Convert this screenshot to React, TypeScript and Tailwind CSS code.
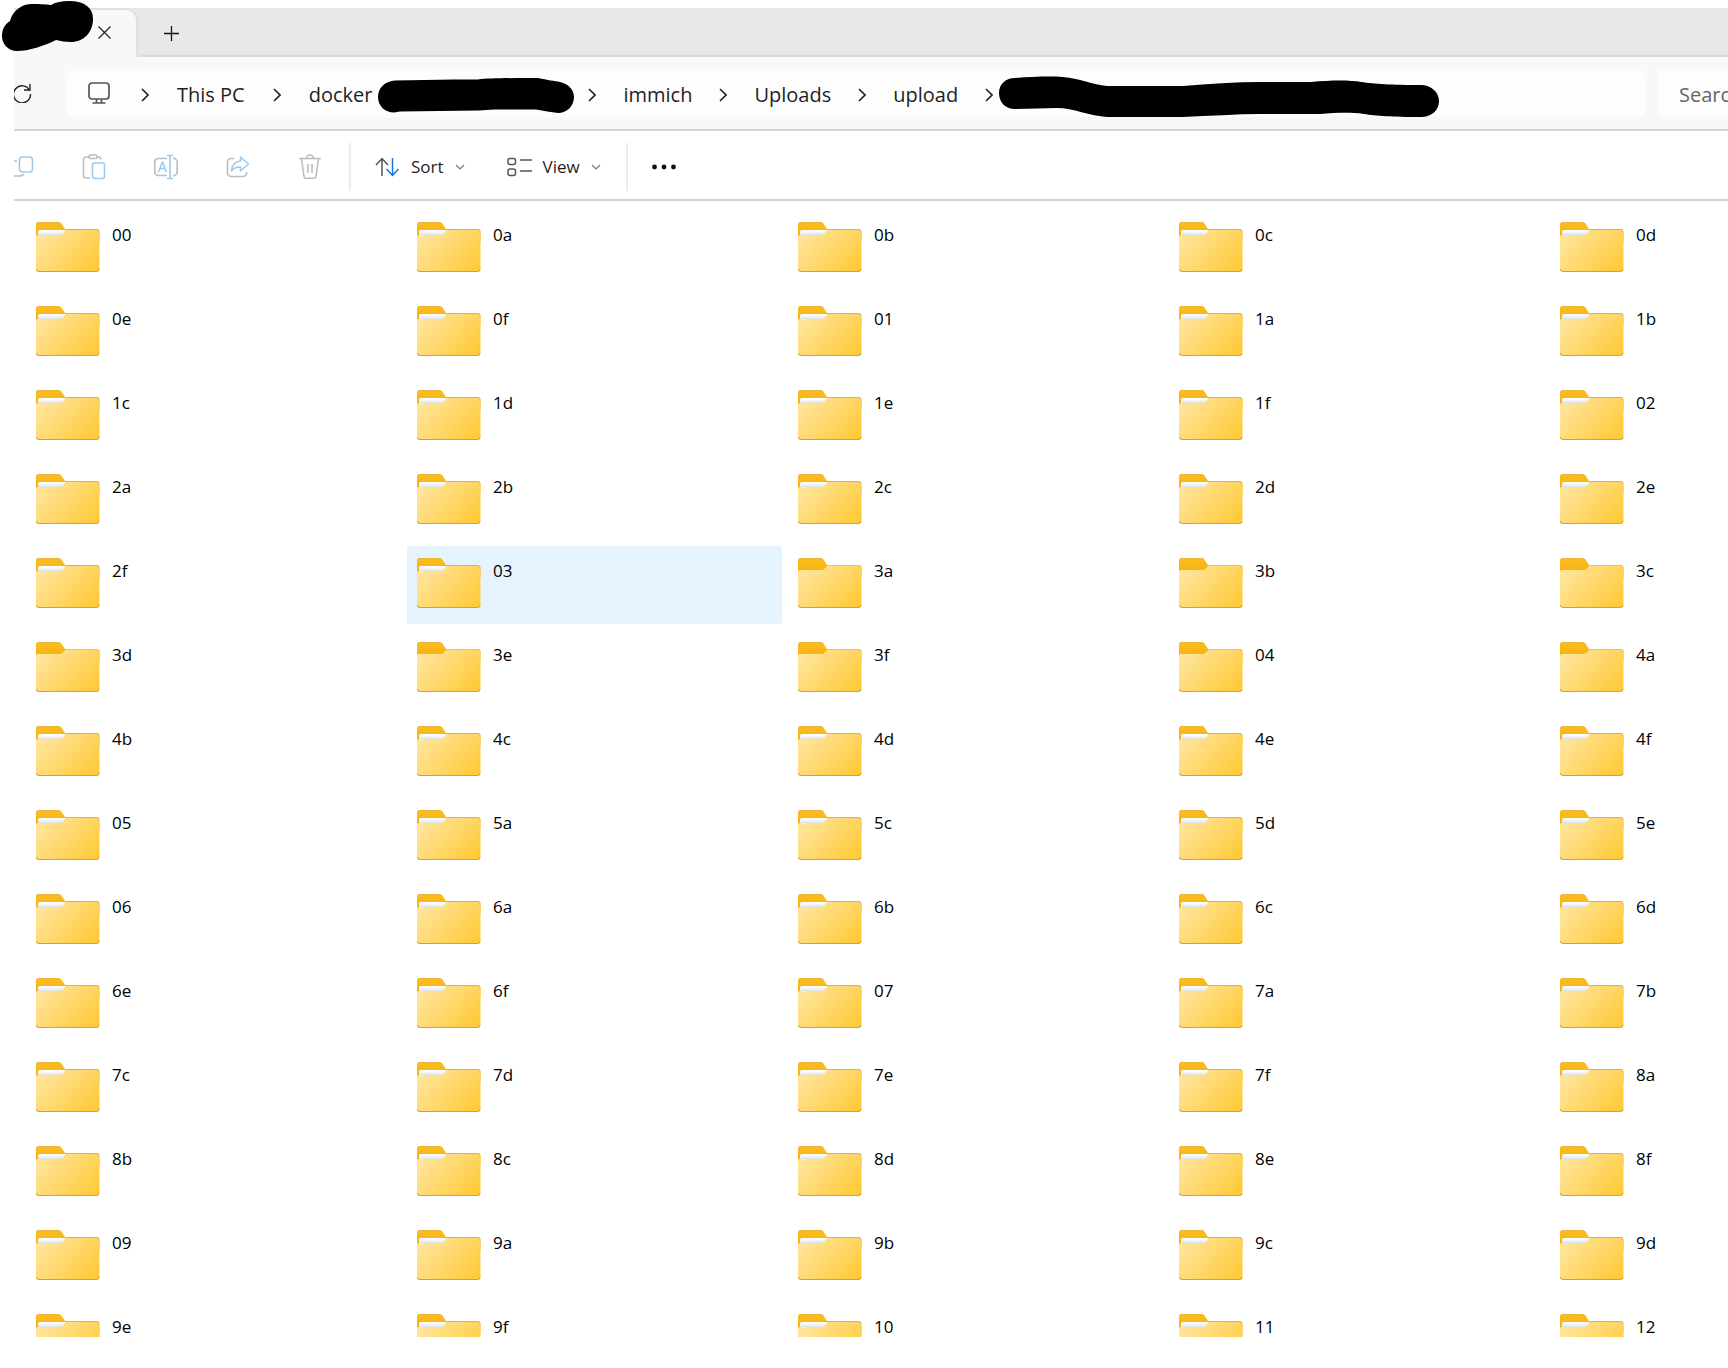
import type { ReactNode } from 'react';
import clsx from 'clsx';

const rows = [
  ['00', '0a', '0b', '0c', '0d'],
  ['0e', '0f', '01', '1a', '1b'],
  ['1c', '1d', '1e', '1f', '02'],
  ['2a', '2b', '2c', '2d', '2e'],
  ['2f', '03', '3a', '3b', '3c'],
  ['3d', '3e', '3f', '04', '4a'],
  ['4b', '4c', '4d', '4e', '4f'],
  ['05', '5a', '5c', '5d', '5e'],
  ['06', '6a', '6b', '6c', '6d'],
  ['6e', '6f', '07', '7a', '7b'],
  ['7c', '7d', '7e', '7f', '8a'],
  ['8b', '8c', '8d', '8e', '8f'],
  ['09', '9a', '9b', '9c', '9d'],
  ['9e', '9f', '10', '11', '12'],
];

const emptyFolders = ['3a', '3b', '3c', '3d', '3e', '3f', '04', '4a'];
const hovered = '03';

const FolderIcon = ({ empty }: { empty: boolean }) => (
  <svg width="64" height="50" viewBox="0 0 64 50" className="shrink-0" aria-hidden="true">
    <path d="M0 3a3 3 0 0 1 3-3h18.500c2 0 3.200.6 4.300 2L29 7h32a3 3 0 0 1 2.500 3v10H0z" fill="url(#tab)" />
    <path d="M.5 3A2.500 2.500 0 0 1 3 .5h18.500c2 0 3 .6 4 2" fill="none" stroke="#e0b04a" strokeOpacity="0.700" />
    {!empty && <path d="M2 10a2 2 0 0 1 2-2h25v3l-3 3H2z" fill="url(#paper)" />}
    <path
      d={
        empty
          ? 'M0 14a2 2 0 0 1 2-2h20.500c2 0 3-.4 4.300-1.600l2-2C29.800 7.400 30.500 7 32 7h29.500A2 2 0 0 1 63.500 9.500V47a3 3 0 0 1-3 3H3a3 3 0 0 1-3-3z'
          : 'M0 15a2 2 0 0 1 2-2h21.500c2 0 3.200-.8 4.200-2.200l.8-1.500C29.200 8.200 29.700 7.500 31 7.500h30A2.300 2.300 0 0 1 63.500 10V47a3 3 0 0 1-3 3H3a3 3 0 0 1-3-3z'
      }
      fill="url(#front)"
    />
    <path d="M29.500 7.500h31a2.500 2.500 0 0 1 2.500 2" fill="none" stroke={empty ? '#f5c04c' : '#dcb054'} />
    <path d="M.5 47A2.500 2.500 0 0 0 3 49.500h57.500A2.500 2.500 0 0 0 63 47" fill="none" stroke="#d3a03c" />
  </svg>
);

const FolderGradients = () => (
  <svg className="absolute size-0" aria-hidden="true">
    <defs>
      <linearGradient id="front" gradientUnits="userSpaceOnUse" x1="6" y1="6" x2="56" y2="52">
        <stop offset="0" stopColor="#ffe7a2" />
        <stop offset="1" stopColor="#ffc937" />
      </linearGradient>
      <linearGradient id="tab" x1="0" y1="0" x2="0" y2="1">
        <stop offset="0" stopColor="#fdbe1c" />
        <stop offset="1" stopColor="#f3ac10" />
      </linearGradient>
      <linearGradient id="paper" x1="0" y1="0" x2="0" y2="1">
        <stop offset="0.2" stopColor="#ffffff" />
        <stop offset="1" stopColor="#d8d8d8" />
      </linearGradient>
    </defs>
  </svg>
);

const ChevronRight = () => (
  <svg width="8" height="14" viewBox="0 0 8 14" fill="none" stroke="#222" strokeWidth="1.600" className="shrink-0" aria-hidden="true">
    <path d="M1 1l6 6-6 6" />
  </svg>
);

const ChevronDown = () => (
  <svg width="10" height="6" viewBox="0 0 10 6" fill="none" stroke="#777" strokeWidth="1.200" aria-hidden="true">
    <path d="M1 1l4 4 4-4" />
  </svg>
);

const Crumb = ({ children }: { children: ReactNode }) => (
  <button type="button" className="shrink-0 whitespace-nowrap text-xl text-[#1f1f1f]">
    {children}
  </button>
);

const ToolButton = ({ label, children }: { label: string; children: ReactNode }) => (
  <button type="button" disabled aria-label={label} className="w-6 shrink-0">
    <svg width="24" height="26" viewBox="0 0 24 26" fill="none" stroke="#bdbdbd" strokeWidth="1.600" strokeLinejoin="round">
      {children}
    </svg>
  </button>
);

const TabStrip = () => (
  <div className="flex h-[49px] bg-[#e8e8e8]">
    <div className="relative z-10 flex w-[124px] items-center justify-end rounded-tr-xl border-t-2 border-r-2 border-[#e0e0e0] bg-[#f8f8f8] pr-[25px]">
      <svg width="93" height="52" viewBox="0 0 93 52" className="absolute top-[-10px] left-[-13px]" aria-hidden="true">
        <path
          d="M16 51C7 51 1 44 1 36c0-7 3-12 8-15C12 10 21 4 31 4c7 0 13 0 19 1 5-3 11-4 18-4 16 0 24 7 24 18 0 13-9 23-22 23-6 0-10-1-15-2-12 6-27 11-39 11z"
          fill="#000"
        />
      </svg>
      <button type="button" aria-label="Close tab" className="mb-0.5">
        <svg width="13" height="13" viewBox="0 0 13 13" fill="none" stroke="#222" strokeWidth="1.200">
          <path d="M.5.5l12 12M12.500.5l-12 12" />
        </svg>
      </button>
    </div>
    <div className="flex flex-1 items-center rounded-bl-md border-b-2 border-[#d9d9d9] pt-[3px] pl-[26px]">
      <button type="button" aria-label="New tab">
        <svg width="15" height="15" viewBox="0 0 15 15" fill="none" stroke="#111" strokeWidth="1.300">
          <path d="M7.500 0v15M0 7.500h15" />
        </svg>
      </button>
    </div>
  </div>
);

const AddressBar = () => (
  <div className="flex h-[74px] items-center border-b-2 border-[#d4d4d4] bg-[#f8f8f8]">
    <button type="button" aria-label="Refresh" className="w-[53px] shrink-0">
      <svg width="18" height="20" viewBox="0 0 18 20" fill="none" stroke="#222" strokeWidth="1.400">
        <path d="M15.600 7.500A8.500 8.500 0 1 0 16.500 11" />
        <path d="M16 1v6h-6" />
      </svg>
    </button>
    <nav aria-label="Path" className="flex h-12 min-w-0 flex-1 items-center rounded-lg bg-[#fdfdfd] pt-[3px] pl-[21px]">
      <svg width="22" height="22" viewBox="0 0 22 22" fill="none" stroke="#555" strokeWidth="1.700" className="mb-1 shrink-0" aria-hidden="true">
        <rect x="1" y="1" width="20" height="16" rx="3" />
        <path d="M8.500 17v4M13.500 17v4M4.500 21h13" />
      </svg>
      <div className="ml-[31px] flex items-center gap-7">
        <ChevronRight />
        <Crumb>This PC</Crumb>
        <ChevronRight />
        <Crumb>docker</Crumb>
      </div>
      <svg width="196" height="35" viewBox="0 0 196 35" className="mt-0.5 ml-1.5 shrink-0" aria-hidden="true">
        <path
          d="M16 34.500C7 34.500 0 28 0 19 0 9 8 3 17 2.500L76 1.500h24C112 0 140 0 160 0c10 2 16 3 22 4 9 2 14 8 14 15 0 9-7 16-16 16-7-1-14-2-22-3.500h-42l-15 1-79 1z"
          fill="#000"
        />
      </svg>
      <div className="ml-3.5 flex items-center gap-[27px]">
        <ChevronRight />
        <Crumb>immich</Crumb>
        <ChevronRight />
        <Crumb>Uploads</Crumb>
        <ChevronRight />
        <Crumb>upload</Crumb>
        <ChevronRight />
      </div>
      <svg width="440" height="42" viewBox="0 0 440 42" className="mt-1 ml-1.5 shrink-0" aria-hidden="true">
        <path
          d="M16 33C6 33 0 26 0 17 0 8 7 2 16 2 32 1 48 0 64 1c16 1 30 8 44 9h76c26-2 52-4 78-4h50c20-2 40-2 50 0 14 2 30 3 60 3 10 0 18 7 18 16s-7 16-18 16c-30 0-45-1-57-3-16-2-28-1-44 0h-60c-24 0-50 2-77 3h-76C91 40 74 32 58 32z"
          fill="#000"
        />
      </svg>
    </nav>
    <input
      type="search"
      aria-label="Search"
      placeholder="Search upload"
      className="-mr-[129px] ml-3 h-12 w-[200px] shrink-0 rounded-lg bg-[#fdfdfd] pt-0.5 pl-[22px] text-xl placeholder:text-[#666]"
    />
  </div>
);

const Toolbar = () => (
  <div className="flex h-[70px] items-center border-b-2 border-[#d4d4d4] bg-white pt-1 text-[17px] text-[#1f1f1f]">
    <div className="flex items-center gap-12">
      <button type="button" disabled aria-label="Copy" className="w-5 shrink-0">
        <svg width="20" height="24" viewBox="0 0 20 24" fill="none" strokeWidth="1.600">
          <path d="M0 6h3M0 21h6c2 0 3-.5 4-2" stroke="#bdbdbd" />
          <rect x="5.500" y="2" width="13" height="15" rx="3" stroke="#9ccbf0" />
        </svg>
      </button>
      <ToolButton label="Paste">
        <path d="M7 3H4a2.500 2.500 0 0 0-2.500 2.500v16A2.500 2.500 0 0 0 4 24h4M15 3h1.500A2.500 2.500 0 0 1 19 5.500" />
        <rect x="7" y="1" width="8" height="3.500" rx="1.700" />
        <rect x="10.500" y="9" width="12" height="15.500" rx="2" stroke="#9ccbf0" />
      </ToolButton>
      <ToolButton label="Rename">
        <path d="M13 4.500H4A3.500 3.500 0 0 0 .8 8v10A3.500 3.500 0 0 0 4 21.500h9M19 4.500a3.500 3.500 0 0 1 4.200 3.500v10a3.500 3.500 0 0 1-4.200 3.500" />
        <path d="M4.500 18L8.500 8l4 10M6 14.500h5M13 1.500h6M16 1.500v23M13 24.500h6" stroke="#9ccbf0" />
      </ToolButton>
      <ToolButton label="Share">
        <path d="M8 4.500H5A3.500 3.500 0 0 0 1.500 8v11A3.500 3.500 0 0 0 5 22.500h12a3.500 3.500 0 0 0 3.500-3.500v-1" />
        <path d="M14.500 3l8 7-8 7v-4c-4 0-7 1-9 4 .3-6 4-9.500 9-10z" stroke="#9ccbf0" />
      </ToolButton>
      <ToolButton label="Delete">
        <path d="M1 4.500h22M3.500 4.500L6 22.500a2 2 0 0 0 2 1.800h8a2 2 0 0 0 2-1.800l2.500-18M8.500 4.500a3.500 3.500 0 0 1 7 0M10 10v9M14 10v9" />
      </ToolButton>
    </div>
    <div className="ml-[27px] h-12 w-0.5 bg-[#ececec]" />
    <button type="button" className="ml-6 flex items-center gap-[11px]">
      <svg width="25" height="20" viewBox="0 0 25 20" fill="none" strokeWidth="1.500" aria-hidden="true">
        <path d="M7 19V1.500M1 8l6-6.500L13 8" stroke="#555" />
        <path d="M17.500 1v17.500M11.500 12l6 6.500 6-6.500" stroke="#0f7ad6" />
      </svg>
      Sort
      <ChevronDown />
    </button>
    <button type="button" className="ml-[42px] flex items-center gap-[11px]">
      <svg width="25" height="20" viewBox="0 0 25 20" fill="none" stroke="#555" strokeWidth="1.500" aria-hidden="true">
        <rect x="1" y="1.500" width="7.500" height="6" rx="2" />
        <rect x="1" y="12" width="7.500" height="6.500" rx="2" />
        <path d="M13 3h12M13 14h12" />
      </svg>
      View
      <ChevronDown />
    </button>
    <div className="ml-[25px] h-12 w-0.5 bg-[#ececec]" />
    <button type="button" aria-label="See more" className="ml-6">
      <svg width="24" height="6" viewBox="0 0 24 6" fill="#111">
        <circle cx="2.500" cy="3" r="2.400" />
        <circle cx="12" cy="3" r="2.400" />
        <circle cx="21.500" cy="3" r="2.400" />
      </svg>
    </button>
  </div>
);

const App = () => {
  return (
    <div className="h-screen overflow-hidden bg-white pt-2 pl-3.5 font-['Open_Sans','Noto_Sans',sans-serif]">
      <div className="flex h-full flex-col pb-[31px]">
        <FolderGradients />
        <header className="shrink-0">
          <TabStrip />
          <AddressBar />
          <Toolbar />
        </header>
        <main className="min-h-0 flex-1 overflow-hidden pt-[9px] pl-3">
          <ul className="grid grid-cols-[repeat(5,375px)] gap-1.5">
            {rows.flat().map((name) => (
              <li
                key={name}
                className={clsx('flex h-[78px] items-start gap-3 rounded-xs pt-3 pl-2.5', name === hovered && 'bg-[#e5f3ff]')}
              >
                <FolderIcon empty={emptyFolders.includes(name)} />
                <span className="pt-[3px] text-[17px] leading-5 text-black">{name}</span>
              </li>
            ))}
          </ul>
        </main>
      </div>
    </div>
  );
};

export default App;
